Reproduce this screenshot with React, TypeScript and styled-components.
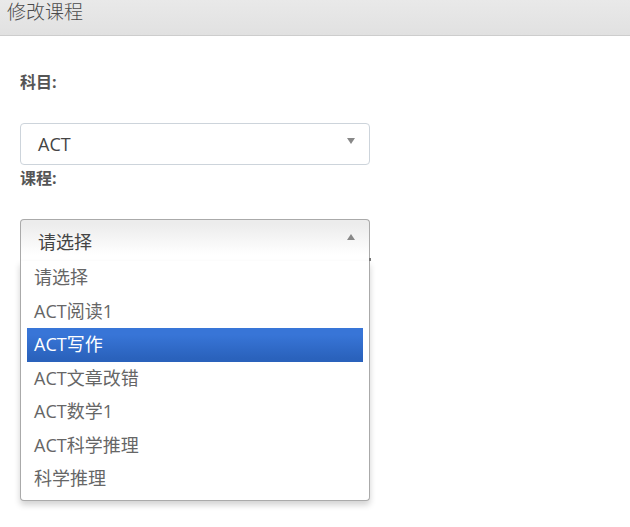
import React from 'react'
import styled, { createGlobalStyle } from 'styled-components'

const font = '"Open Sans", "Noto Sans CJK SC", sans-serif'

const GlobalStyle = createGlobalStyle`
  html, body {
    margin: 0;
    padding: 0;
    background: #fff;
  }
  body {
    font-family: ${font};
  }
`

const Page = styled.div`
  width: 630px;
  height: 527px;
  overflow: hidden;
  background: #fff;
`

const Header = styled.div`
  height: 36px;
  box-sizing: border-box;
  padding: 0 7px;
  background: linear-gradient(#e9e9e9, #e1e1e1);
  border-bottom: 1px solid #cdcdcd;
  font-size: 19px;
  line-height: 24px;
  font-weight: 300;
  color: #4a4a4a;
`

const Body = styled.div`
  padding: 35px 20px 0;
`

const Label = styled.div<{ $top?: number }>`
  margin-top: ${p => p.$top ?? 0}px;
  font-size: 16px;
  line-height: 22px;
  font-weight: 700;
  color: #555;
`

const Field = styled.div<{ $gap: number }>`
  margin-top: ${p => p.$gap}px;
  width: 350px;
`

const Single = styled.div<{ $open?: boolean }>`
  position: relative;
  height: 42px;
  box-sizing: border-box;
  padding: 0 17px;
  display: flex;
  align-items: center;
  font-size: 18px;
  color: #444;
  border: 1px solid ${p => (p.$open ? '#aaa' : '#cdd4db')};
  border-bottom: ${p => (p.$open ? '0' : '')};
  border-radius: ${p => (p.$open ? '4px 4px 0 0' : '4px')};
  background: ${p => (p.$open ? 'linear-gradient(#ececec 10%, #fff 85%)' : '#fff')};
`

const Arrow = styled.span<{ $up?: boolean }>`
  position: absolute;
  right: 14px;
  top: ${p => (p.$up ? '14px' : '14px')};
  width: 0;
  height: 0;
  border-left: 4px solid transparent;
  border-right: 4px solid transparent;
  ${p => (p.$up ? 'border-bottom: 6px solid #888;' : 'border-top: 6px solid #888;')}
`

const Drop = styled.div`
  position: relative;
  border: 1px solid #aaa;
  border-top: 0;
  border-radius: 0 0 4px 4px;
  box-shadow: 0 4px 6px rgba(0, 0, 0, 0.18);
  background: #fff;
  padding: 0 6px 4px;

  &::after {
    content: '';
    position: absolute;
    right: -2px;
    top: -3px;
    width: 2px;
    height: 3px;
    background: #777;
  }
`

const Results = styled.ul`
  margin: 0;
  padding: 0;
  list-style: none;
`

const Item = styled.li<{ $active?: boolean }>`
  height: 33.5px;
  line-height: 33.5px;
  padding: 0 7px;
  font-size: 18px;
  color: ${p => (p.$active ? '#fff' : '#666')};
  background: ${p => (p.$active ? 'linear-gradient(#3875d7 20%, #2a62bc 90%)' : 'transparent')};
`

const courses = ['请选择', 'ACT阅读1', 'ACT写作', 'ACT文章改错', 'ACT数学1', 'ACT科学推理', '科学推理']

export default function App() {
  return (
    <Page>
      <GlobalStyle />
      <Header>修改课程</Header>
      <Body>
        <Label>科目:</Label>
        <Field $gap={30}>
          <Single>
            ACT
            <Arrow />
          </Single>
        </Field>
        <Label $top={2}>课程:</Label>
        <Field $gap={30}>
          <Single $open>
            请选择
            <Arrow $up />
          </Single>
          <Drop>
            <Results>
              {courses.map(c => (
                <Item key={c} $active={c === 'ACT写作'}>
                  {c}
                </Item>
              ))}
            </Results>
          </Drop>
        </Field>
      </Body>
    </Page>
  )
}
